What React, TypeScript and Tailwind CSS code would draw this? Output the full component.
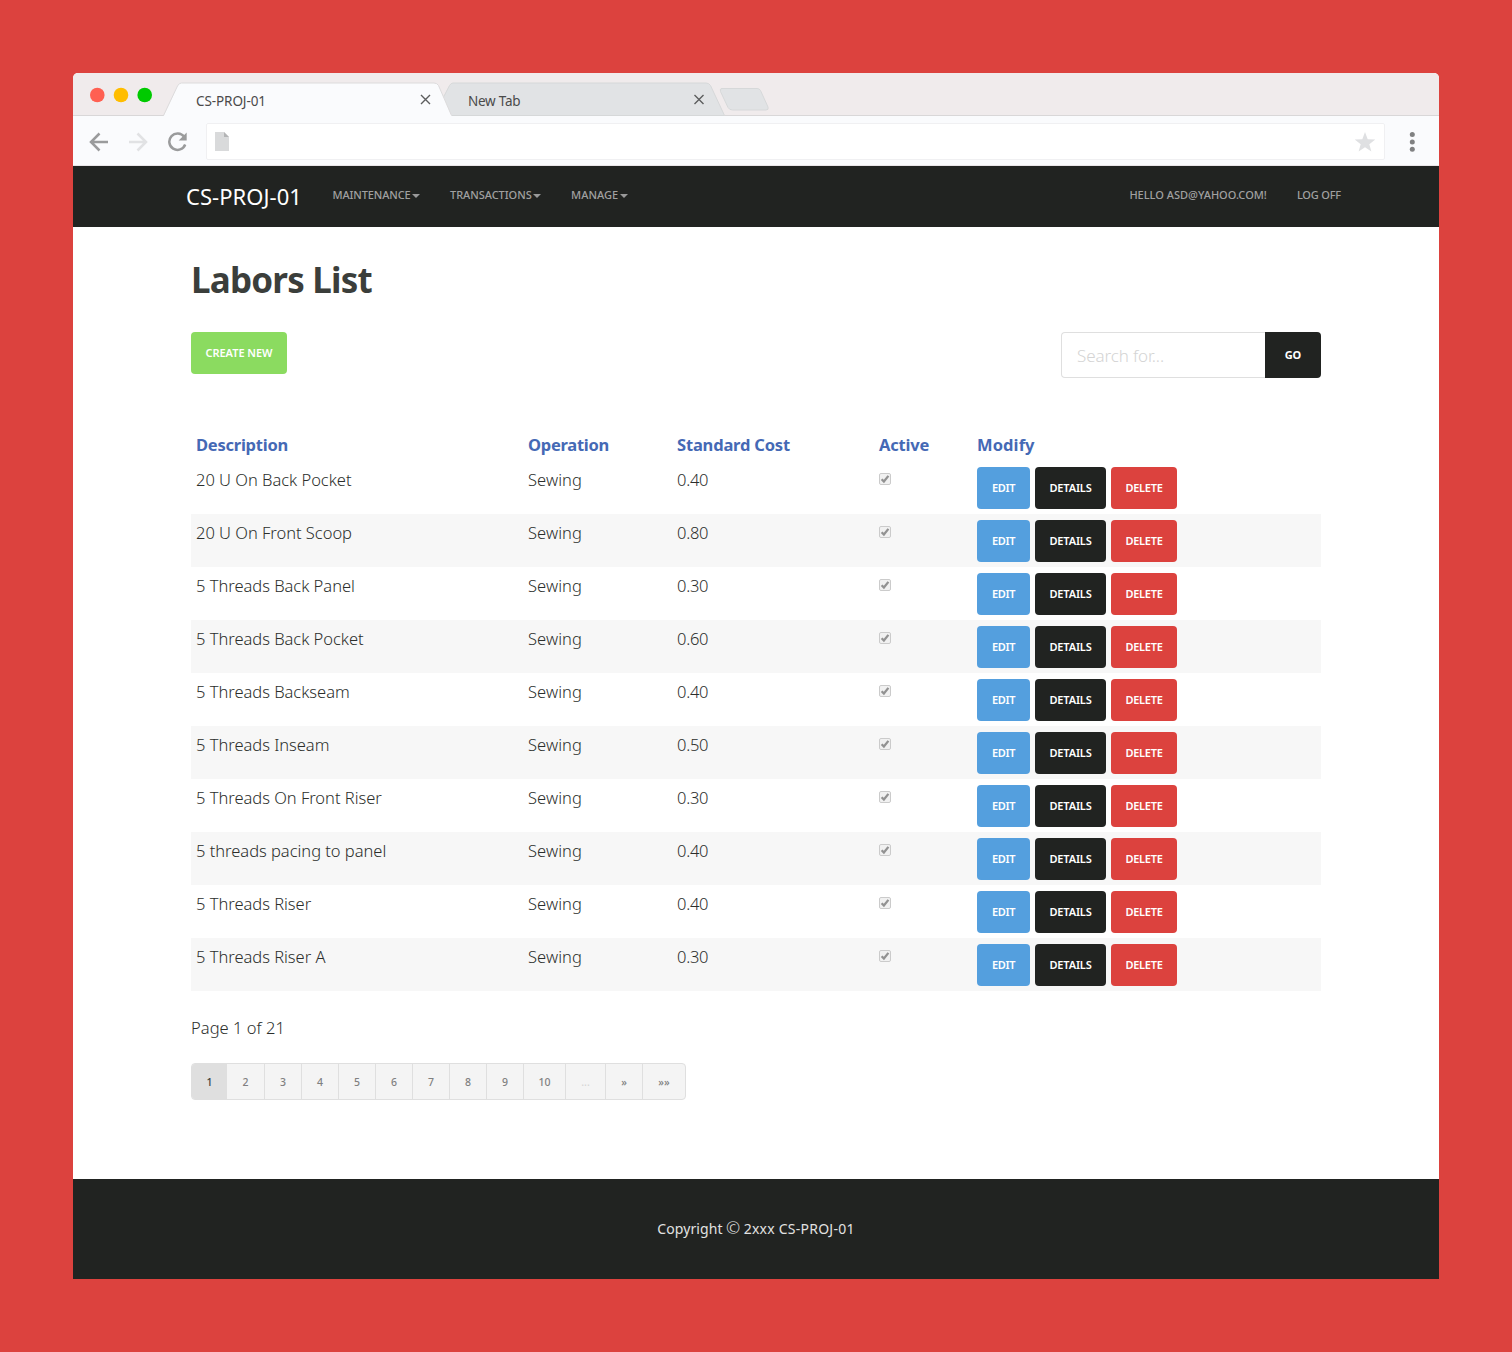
import React from "react";

const labors = [
  { description: "20 U On Back Pocket", cost: "0.40" },
  { description: "20 U On Front Scoop", cost: "0.80" },
  { description: "5 Threads Back Panel", cost: "0.30" },
  { description: "5 Threads Back Pocket", cost: "0.60" },
  { description: "5 Threads Backseam", cost: "0.40" },
  { description: "5 Threads Inseam", cost: "0.50" },
  { description: "5 Threads On Front Riser", cost: "0.30" },
  { description: "5 threads pacing to panel", cost: "0.40" },
  { description: "5 Threads Riser", cost: "0.40" },
  { description: "5 Threads Riser A", cost: "0.30" },
];

const pages = [
  { label: "2", width: "w-[38px]" },
  { label: "3", width: "w-[37px]" },
  { label: "4", width: "w-[37px]" },
  { label: "5", width: "w-[37px]" },
  { label: "6", width: "w-[37px]" },
  { label: "7", width: "w-[37px]" },
  { label: "8", width: "w-[37px]" },
  { label: "9", width: "w-[37px]" },
  { label: "10", width: "w-[42px]" },
  { label: "...", width: "w-[40px]" },
  { label: "»", width: "w-[37px]" },
  { label: "»»", width: "w-[42px]" },
];

function TabStrip() {
  return (
    <div className="relative h-[43px] bg-[#f0ebec]">
      <svg className="absolute inset-0" width="1366" height="44" viewBox="0 0 1366 44" fill="none">
        <path d="M0 42.5H1366" stroke="#d9d7d8" />
        <path d="M369.500 26L376.500 12.500Q378 10 380 10H633Q636 10 637.500 12.500L651.500 42.500H378Z" fill="#e1e3e5" stroke="#d6d8d9" />
        <path d="M89 44L91 42.500L104.500 13Q106 10 108.500 10H361Q364 10 365.500 12.500L378.500 42.500L380 44Z" fill="#fafbfd" />
        <path d="M90.500 42.500L104.500 13Q106 10 108.500 10H361Q364 10 365.500 12.500L378.500 42.500" stroke="#dcdbdc" />
        <path d="M648.500 15.500H684Q686.500 15.500 687.500 17.500L695 34Q696 37 693 37H659.500Q656.500 37 655 34.500L647.500 18.500Q646.500 15.500 649 15.500Z" fill="#e1e3e5" stroke="#d6d8d9" />
        <path d="M348 22L357 31M357 22L348 31M621.500 22L630.500 31M630.500 22L621.500 31" stroke="#5c5d5e" strokeWidth="1.400" />
        <circle cx="24.300" cy="22" r="7.300" fill="#ff6052" />
        <circle cx="48" cy="22" r="7.300" fill="#ffbd00" />
        <circle cx="71.700" cy="22" r="7.300" fill="#00ca00" />
      </svg>
      <div className="relative flex h-[43px] pt-[17px] text-[13.5px] leading-[22px] text-[#4a4a4a]">
        <span className="ml-[123px] w-[272px] tracking-[-0.09px]">CS-PROJ-01</span>
        <span className="tracking-[-0.25px]">New Tab</span>
      </div>
    </div>
  );
}

function Toolbar() {
  return (
    <div className="flex h-[50px] items-center border-b border-[#e9e5e8] bg-[#fafbfd]">
      <svg className="ml-[16px] mt-[2px]" width="20" height="20" viewBox="0 0 20 20" fill="none" stroke="#9a9b9c" strokeWidth="2.500">
        <path d="M19 10H2.500M10.500 1.500L2 10L10.500 18.500" />
      </svg>
      <svg className="ml-[20px] mt-[2px]" width="20" height="20" viewBox="0 0 20 20" fill="none" stroke="#e1e2e4" strokeWidth="2.500">
        <path d="M0 10H16.500M8.500 1.500L17 10L8.500 18.500" />
      </svg>
      <svg className="ml-[18px] mt-[2px]" width="22" height="20" viewBox="0 0 22 20" fill="none">
        <path d="M17.200 4.900A8.200 8.200 0 1 0 18.200 12.500" stroke="#9a9b9c" strokeWidth="2.500" />
        <path d="M19.700 0.500V8.500H11.700Z" fill="#9a9b9c" />
      </svg>
      <div className="ml-[17px] mt-[2px] flex h-[37px] w-[1179px] items-center justify-between rounded-[2px] border border-[#f0f0f2] bg-white pl-[8px] pr-[8px]">
        <svg width="14" height="19" viewBox="0 0 14 19">
          <path d="M0 0H9L14 5V19H0Z" fill="#d9dadb" />
          <path d="M9 0L14 5H9Z" fill="#b3b4b5" />
        </svg>
        <svg width="22" height="20" viewBox="0 0 22 20">
          <path d="M11 0L13.700 7.300L21.300 7.600L15.300 12.300L17.400 19.500L11 15.300L4.600 19.500L6.700 12.300L0.700 7.600L8.300 7.300Z" fill="#dfe0e2" />
        </svg>
      </div>
      <svg className="ml-[24px] mt-[2px]" width="6" height="20" viewBox="0 0 6 20" fill="#808182">
        <circle cx="3.300" cy="2.600" r="2.500" />
        <circle cx="3.300" cy="9.900" r="2.500" />
        <circle cx="3.300" cy="17.200" r="2.500" />
      </svg>
    </div>
  );
}

function Caret() {
  return <span className="ml-[1.5px] mt-px inline-block border-x-[4px] border-t-[4px] border-x-transparent border-t-[#999999]" />;
}

function Navbar() {
  return (
    <nav className="flex h-[61px] items-center bg-[#212321] pl-[113px] pr-[98px] text-[11px] font-medium text-[#a0a0a0]">
      <span className="w-[146.5px] text-[22px] font-normal tracking-[0.05px] text-white">CS-PROJ-01</span>
      <div className="flex pb-[2px]">
        <span className="flex w-[117.5px] items-center tracking-[-0.12px]">MAINTENANCE<Caret /></span>
        <span className="flex w-[121px] items-center tracking-[-0.04px]">TRANSACTIONS<Caret /></span>
        <span className="flex items-center tracking-[0.05px]">MANAGE<Caret /></span>
      </div>
      <div className="ml-auto flex gap-[30px] pb-[2px]">
        <span>HELLO ASD@YAHOO.COM!</span>
        <span className="tracking-[-0.18px]">LOG OFF</span>
      </div>
    </nav>
  );
}

function Check() {
  return (
    <svg className="mt-[5px] block" width="12" height="12" viewBox="0 0 12 12">
      <rect x="0.500" y="0.500" width="11" height="11" rx="1.500" fill="#f1f1f1" stroke="#cbcbcb" />
      <path d="M2.600 6.200L4.900 8.500L9.400 2.900" fill="none" stroke="#929292" strokeWidth="2.300" />
    </svg>
  );
}

const button = "flex h-[42px] items-center justify-center rounded-[4px] text-[11px] font-semibold text-white";

function LaborTable() {
  return (
    <table className="mt-[49px] w-[1130px] table-fixed border-collapse text-left text-[16.5px] leading-[24px] text-[#2b2e2b]">
      <colgroup>
        <col className="w-[332px]" />
        <col className="w-[149px]" />
        <col className="w-[202px]" />
        <col className="w-[98px]" />
        <col className="w-[349px]" />
      </colgroup>
      <thead>
        <tr className="h-[34px] align-top font-bold text-[#4569b5]">
          <th className="px-[5px] pt-[6px] tracking-[-0.24px]">Description</th>
          <th className="px-[5px] pt-[6px] tracking-[-0.27px]">Operation</th>
          <th className="px-[5px] pt-[6px] tracking-[-0.18px]">Standard Cost</th>
          <th className="px-[5px] pt-[6px] tracking-[-0.2px]">Active</th>
          <th className="px-[5px] pt-[6px] tracking-[0.1px]">Modify</th>
        </tr>
      </thead>
      <tbody className="font-light">
        {labors.map((labor) => (
          <tr key={labor.description} className="h-[53px] align-top even:bg-[#f7f7f7]">
            <td className="px-[5px] pt-[7px] tracking-[-0.02px]">{labor.description}</td>
            <td className="px-[5px] pt-[7px] tracking-[0.08px]">Sewing</td>
            <td className="px-[5px] pt-[7px] tracking-[-0.25px]">{labor.cost}</td>
            <td className="px-[5px] pt-[7px]"><Check /></td>
            <td className="px-[5px] pt-[6px]">
              <div className="flex gap-[5px]">
                <span className={`${button} w-[53px] bg-[#549fde] tracking-[-0.35px]`}>EDIT</span>
                <span className={`${button} w-[71px] bg-[#212321] tracking-[-0.15px]`}>DETAILS</span>
                <span className={`${button} w-[66px] bg-[#dc423e] tracking-[-0.28px]`}>DELETE</span>
              </div>
            </td>
          </tr>
        ))}
      </tbody>
    </table>
  );
}

function Pagination() {
  return (
    <div className="mt-[23px] flex h-[37px] w-[495px] overflow-hidden rounded-[4px] border border-[#dfdfdf] bg-[#f4f4f4] text-[10.5px] font-medium leading-[36px] text-[#808080]">
      <span className="w-[35px] shrink-0 bg-[#dfdfdf] text-center text-[#3b3e3b]">1</span>
      {pages.map((page) => (
        <span
          key={page.label}
          className={`${page.width} shrink-0 border-r border-[#dfdfdf] text-center last:border-r-0 ${page.label === "..." ? "text-[#d6d6d6]" : ""}`}
        >
          {page.label}
        </span>
      ))}
    </div>
  );
}

export default function App() {
  return (
    <div className="h-[1352px] w-[1512px] bg-[#dc423e] p-[73px] font-['Noto_Sans','Open_Sans',sans-serif]">
      <div className="flex h-[1206px] flex-col overflow-hidden rounded-t-[5px] bg-white">
        <TabStrip />
        <Toolbar />
        <Navbar />
        <main className="h-[952px] pl-[118px] pr-[118px] pt-[29px]">
          <h1 className="text-[35px] font-bold leading-[48px] tracking-[-0.8px] text-[#3b3e3b]">Labors List</h1>
          <div className="mt-[28px] flex items-start justify-between">
            <span className={`${button} w-[96px] bg-[#8bdb60] tracking-[-0.05px]`}>CREATE NEW</span>
            <div className="flex h-[46px] w-[260px]">
              <div className="flex-1 rounded-l-[4px] border border-r-0 border-[#dfdfdf] pl-[15px] text-[17px] font-light leading-[46px] tracking-[-0.12px] text-[#d4d4d4]">
                Search for...
              </div>
              <span className="w-[56px] rounded-r-[4px] bg-[#212321] text-center text-[11px] font-bold leading-[46px] text-white">GO</span>
            </div>
          </div>
          <LaborTable />
          <p className="mt-[25px] text-[16.5px] font-light leading-[24px] tracking-[0.04px] text-[#2b2e2b]">Page 1 of 21</p>
          <Pagination />
        </main>
        <footer className="flex h-[100px] items-center justify-center bg-[#212321] pb-[2px] text-[14px] text-[#e2e2e2]">
          <span className="tracking-[0.08px]">Copyright</span>
          <span className="mx-[3.5px] pb-[1px] text-[17px] font-light">©</span>
          <span className="tracking-[0.24px]">2xxx CS-PROJ-01</span>
        </footer>
      </div>
    </div>
  );
}
